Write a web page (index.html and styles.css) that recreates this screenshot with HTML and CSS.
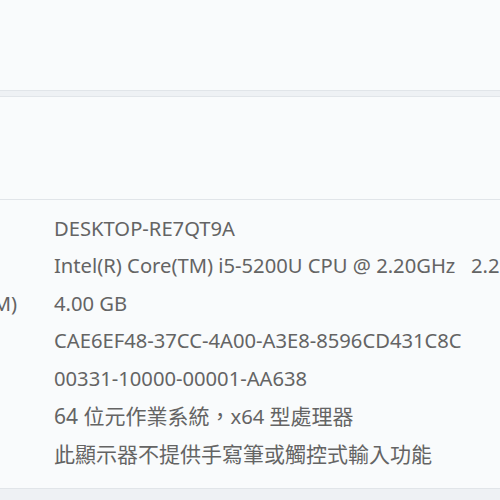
FILE: index.html
```html
<!DOCTYPE html>
<html>
<head>
    <meta charset="UTF-8">
    <title>關於</title>
    <link rel="stylesheet" href="styles.css">
</head>
<body>
    <div class="page">
        <div class="card top-card"></div>

        <div class="expander">
            <div class="card expander-header"></div>
            <div class="card expander-body">
                <div class="spec-row">
                    <span class="spec-label">裝置名稱</span>
                    <span class="spec-value">DESKTOP-RE7QT9A</span>
                </div>
                <div class="spec-row">
                    <span class="spec-label">處理器</span>
                    <span class="spec-value">Intel(R) Core(TM) i5-5200U CPU @ 2.20GHz&nbsp;&nbsp;&nbsp;2.20 GHz</span>
                </div>
                <div class="spec-row">
                    <span class="spec-label">已安裝記憶體(RAM)</span>
                    <span class="spec-value">4.00 GB</span>
                </div>
                <div class="spec-row">
                    <span class="spec-label">裝置識別碼</span>
                    <span class="spec-value">CAE6EF48-37CC-4A00-A3E8-8596CD431C8C</span>
                </div>
                <div class="spec-row">
                    <span class="spec-label">產品識別碼</span>
                    <span class="spec-value">00331-10000-00001-AA638</span>
                </div>
                <div class="spec-row">
                    <span class="spec-label">系統類型</span>
                    <span class="spec-value"><span class="cjk">64 位元作業系統，</span>x64 <span class="cjk">型處理器</span></span>
                </div>
                <div class="spec-row">
                    <span class="spec-label">手寫筆與觸控</span>
                    <span class="spec-value cjk">此顯示器不提供手寫筆或觸控式輸入功能</span>
                </div>
            </div>
        </div>
    </div>
</body>
</html>
```

FILE: styles.css
```css
body {
    margin: 0;
    background-color: #eef1f4;
    font-family: "Noto Sans", "Noto Sans CJK TC", sans-serif;
    overflow: hidden;
    height: 500px;
}

.page {
    margin: 0 -6px;
}

.card {
    background-color: #f9fbfc;
    border: 1px solid #e1e5e9;
}

.top-card {
    height: 90px;
    border-top: none;
    margin-bottom: 5px;
}

.expander-header {
    height: 102px;
}

.expander-body {
    border-top: none;
    padding: 9px 0 16px;
}

.spec-row {
    display: flex;
    align-items: center;
    height: 37.5px;
    white-space: nowrap;
    font-size: 20.2px;
    color: #646464;
}

.spec-label {
    width: 214px;
    margin-left: -155px;
    flex: none;
}

.spec-value {
    flex: none;
}

.cjk {
    font-size: 21px;
}
```
